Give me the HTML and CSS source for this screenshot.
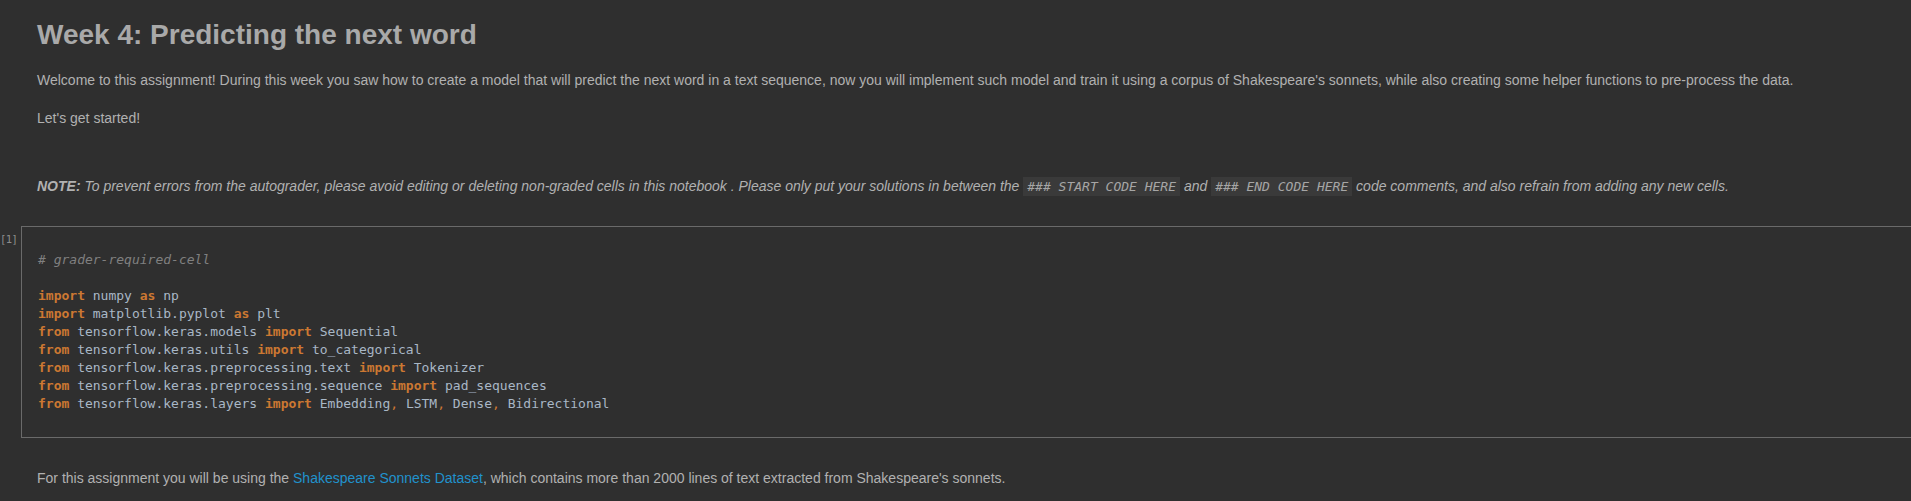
FILE: index.html
```html
<!DOCTYPE html>
<html>
<head>
<meta charset="utf-8">
<link rel="stylesheet" href="styles.css">
</head>
<body>
<div class="page">
  <div class="md">
    <h1 class="title">Week 4: Predicting the next word</h1>
    <p class="text">Welcome to this assignment! During this week you saw how to create a model that will predict the next word in a text sequence, now you will implement such model and train it using a corpus of Shakespeare's sonnets, while also creating some helper functions to pre-process the data.</p>
    <p class="text">Let's get started!</p>
    <p class="text note"><em><strong>NOTE:</strong> To prevent errors from the autograder, please avoid editing or deleting non-graded cells in this notebook . Please only put your solutions in between the <code class="inline">### START CODE HERE</code> and <code class="inline">### END CODE HERE</code> code comments, and also refrain from adding any new cells.</em></p>
  </div>
  <div class="cell">
    <div class="prompt">[1]</div>
    <div class="codebox"><pre class="code"><span class="cm"># grader-required-cell</span>

<span class="kw">import</span> numpy <span class="kw">as</span> np
<span class="kw">import</span> matplotlib.pyplot <span class="kw">as</span> plt
<span class="kw">from</span> tensorflow.keras.models <span class="kw">import</span> Sequential
<span class="kw">from</span> tensorflow.keras.utils <span class="kw">import</span> to_categorical
<span class="kw">from</span> tensorflow.keras.preprocessing.text <span class="kw">import</span> Tokenizer
<span class="kw">from</span> tensorflow.keras.preprocessing.sequence <span class="kw">import</span> pad_sequences
<span class="kw">from</span> tensorflow.keras.layers <span class="kw">import</span> Embedding<span class="pn">,</span> LSTM<span class="pn">,</span> Dense<span class="pn">,</span> Bidirectional</pre></div>
  </div>
  <div class="md">
    <p class="text after">For this assignment you will be using the <a class="link" href="#">Shakespeare Sonnets Dataset</a>, which contains more than 2000 lines of text extracted from Shakespeare's sonnets.</p>
  </div>
</div>
</body>
</html>
```

FILE: styles.css
```css
html, body {
  margin: 0;
  padding: 0;
  background: #2f2f2f;
  overflow: hidden;
}

.page {
  padding-top: 18px;
  font-family: "Liberation Sans", Arial, sans-serif;
  color: #b1b1b1;
}

.md {
  padding-left: 37px;
}

.title {
  margin: 0 0 18px 0;
  font-size: 28px;
  line-height: 34px;
  font-weight: bold;
  color: #a9a9a9;
}

.text {
  margin: 0 0 18px 0;
  font-size: 14px;
  line-height: 20px;
  white-space: nowrap;
}

.note {
  margin-top: 48px;
  margin-bottom: 29px;
}

.note em strong {
  font-weight: bold;
}

.inline {
  font-family: "DejaVu Sans Mono", monospace;
  font-size: 13px;
  font-style: italic;
  background: #3a3a3a;
  color: #a6a6a6;
  padding: 2px 4px;
  line-height: 20px;
}

.cell {
  display: flex;
  align-items: flex-start;
  margin-bottom: 30px;
}

.prompt {
  width: 21px;
  flex: none;
  padding-top: 6px;
  font-family: "DejaVu Sans Mono", monospace;
  font-size: 10.5px;
  line-height: 15px;
  letter-spacing: -0.6px;
  color: #8c8c8c;
}

.codebox {
  flex: 1;
  margin-right: -20px;
  border: 1px solid #6a6a6a;
  padding: 24px 16px;
}

.code {
  margin: 0;
  font-family: "DejaVu Sans Mono", monospace;
  font-size: 13px;
  line-height: 18px;
  color: #a9b7c6;
}

.kw {
  color: #cc7832;
  font-weight: bold;
}

.pn {
  color: #cc7832;
}

.cm {
  color: #808080;
  font-style: italic;
}

.after {
  margin: 0;
}

.link {
  color: #2192cc;
  text-decoration: none;
}
```
